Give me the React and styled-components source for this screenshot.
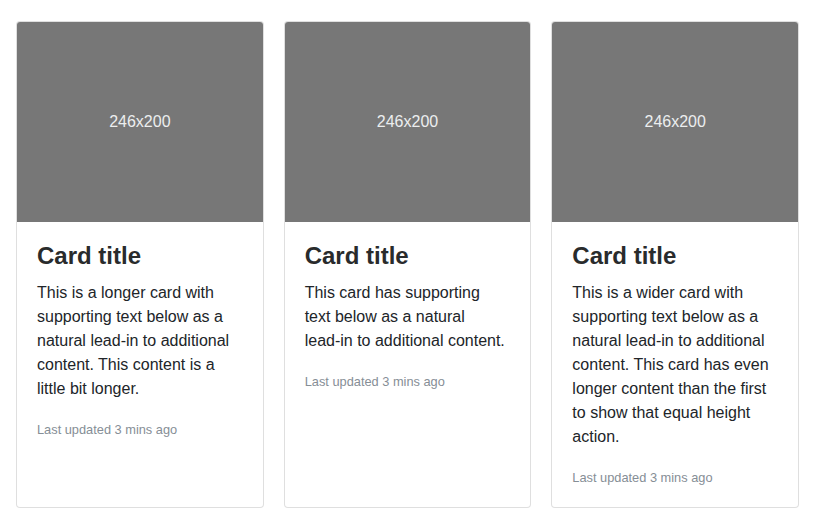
import React from "react";
import styled, { createGlobalStyle } from "styled-components";

const cards = [
  {
    text:
      "This is a longer card with supporting text below as a natural lead-in to additional content. This content is a little bit longer.",
  },
  {
    text:
      "This card has supporting text below as a natural lead-in to additional content.",
  },
  {
    text:
      "This is a wider card with supporting text below as a natural lead-in to additional content. This card has even longer content than the first to show that equal height action.",
  },
];

// keep "lead-in" on one line, like the original font wraps it
const renderText = (text) => {
  const parts = text.split("lead-in");
  return parts.map((part, i) => (
    <React.Fragment key={i}>
      {part}
      {i < parts.length - 1 && <NoBreak>lead-in</NoBreak>}
    </React.Fragment>
  ));
};

const App = () => {
  return (
    <>
      <GlobalStyle />
      <Deck>
        {cards.map((card, i) => (
          <Card key={i}>
            <Placeholder>246x200</Placeholder>
            <Body>
              <Title>Card title</Title>
              <Text>{renderText(card.text)}</Text>
              <Text>
                <Muted>Last updated 3 mins ago</Muted>
              </Text>
            </Body>
          </Card>
        ))}
      </Deck>
    </>
  );
};

export default App;

const GlobalStyle = createGlobalStyle`
  * {
    box-sizing: border-box;
  }
  body {
    margin: 0;
    background: #fff;
    font-family: "Liberation Sans", Arial, sans-serif;
    font-size: 16px;
    line-height: 1.5;
    color: #212529;
  }
`;

const Deck = styled.div`
  display: flex;
  align-items: stretch;
  gap: 20px;
  padding: 21px 18px 0 16px;
`;

const Card = styled.div`
  flex: 1 1 0;
  display: flex;
  flex-direction: column;
  background: #fff;
  border: 1px solid rgba(0, 0, 0, 0.125);
  border-radius: 4px;
`;

const Placeholder = styled.div`
  flex-shrink: 0;
  display: flex;
  align-items: center;
  justify-content: center;
  height: 200px;
  background: #777777;
  color: #eceeef;
  font-size: 16px;
  border-radius: 3px 3px 0 0;
`;

const Body = styled.div`
  flex: 1;
  padding: 21px 21px 18px 20px;
`;

const Title = styled.h4`
  margin: 0 0 12px;
  font-size: 24px;
  font-weight: 700;
  line-height: 1.1;
  color: #292b2c;
`;

const Text = styled.p`
  margin: 0 0 16px;
  &:last-child {
    margin-bottom: 0;
  }
`;

const NoBreak = styled.span`
  white-space: nowrap;
`;

const Muted = styled.small`
  font-size: 80%;
  color: #868e96;
`;
